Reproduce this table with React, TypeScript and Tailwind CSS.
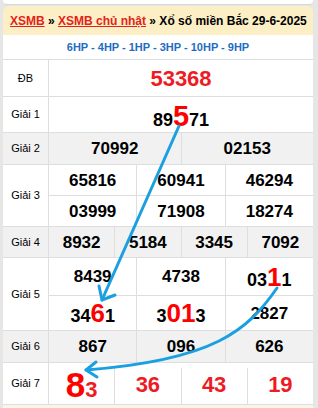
import React from "react";

const RED = "text-[#ed1c24]";

type Part = { t: string; big?: boolean };

const Num: React.FC<{ parts: Part[]; size?: string; bigSize?: string }> = ({
  parts,
  size = "text-[18px]",
  bigSize = "text-[26px]",
}) => (
  <span className="font-bold leading-none text-black">
    {parts.map((p, i) =>
      p.big ? (
        <span key={i} className={`${bigSize} text-[#ff0000]`}>
          {p.t}
        </span>
      ) : (
        <span key={i} className={size}>
          {p.t}
        </span>
      )
    )}
  </span>
);

const Label: React.FC<{ text: string }> = ({ text }) => (
  <div className="w-[46px] shrink-0 flex items-center justify-center border-r border-[#dedede] text-[11px] text-black">
    {text}
  </div>
);

const Cells: React.FC<{ items: React.ReactNode[]; h: string; last?: boolean }> = ({ items, h, last }) => (
  <div className={`flex ${h} ${last ? "" : "border-b border-[#dedede]"}`}>
    {items.map((it, i) => (
      <div
        key={i}
        className={`flex-1 flex items-center justify-center ${i < items.length - 1 ? "border-r border-[#dedede]" : ""}`}
      >
        {it}
      </div>
    ))}
  </div>
);

const n = (s: string) => <span className="text-[17px] font-bold leading-none text-black">{s}</span>;

export default function App() {
  return (
    <div
      className="relative w-[318px] h-[408px] overflow-hidden bg-[#e6e6e6]"
      style={{ fontFamily: '"Liberation Sans", Arial, sans-serif' }}
    >
      <div className="ml-[3px] w-[310px]">
        <div className="h-[5px] bg-white rounded-b-[4px] border-b border-[#d6d6d6]" />
        <div className="mt-[1px] h-[29px] bg-[#fcefc5] rounded-t-[6px] flex items-center pl-[7px] text-[12px] font-bold text-black whitespace-nowrap">
          <span className="text-[#e2231a] underline">XSMB</span>
          <span>&nbsp;»&nbsp;</span>
          <span className="text-[#e2231a] underline">XSMB chủ nhật</span>
          <span>&nbsp;» Xổ số miền Bắc 29-6-2025</span>
        </div>
        <div className="h-[25px] bg-white border-b border-[#dedede] flex items-center justify-center text-[11px] font-bold text-[#1f6dbf]">
          6HP - 4HP - 1HP - 3HP - 10HP - 9HP
        </div>

        {/* ĐB */}
        <div className="flex h-[37px] bg-white border-b border-[#dedede]">
          <Label text="ĐB" />
          <div className="flex-1 flex items-center justify-center">
            <span className={`text-[22px] font-bold ${RED}`}>53368</span>
          </div>
        </div>

        {/* Giải 1 */}
        <div className="flex h-[36px] bg-white border-b border-[#dedede]">
          <Label text="Giải 1" />
          <div className="flex-1 flex items-center justify-center pt-[4px]">
            <Num parts={[{ t: "89" }, { t: "5", big: true }, { t: "71" }]} size="text-[18px]" bigSize="text-[29px]" />
          </div>
        </div>

        {/* Giải 2 */}
        <div className="flex h-[32px] bg-[#f1f1f1] border-b border-[#dedede]">
          <Label text="Giải 2" />
          <div className="flex-1">
            <Cells items={[n("70992"), n("02153")]} h="h-full" last />
          </div>
        </div>

        {/* Giải 3 */}
        <div className="flex h-[62px] bg-white border-b border-[#dedede]">
          <Label text="Giải 3" />
          <div className="flex-1 flex flex-col">
            <Cells items={[n("65816"), n("60941"), n("46294")]} h="h-[31px]" />
            <Cells items={[n("03999"), n("71908"), n("18274")]} h="flex-1" last />
          </div>
        </div>

        {/* Giải 4 */}
        <div className="flex h-[31px] bg-[#f1f1f1] border-b border-[#dedede]">
          <Label text="Giải 4" />
          <div className="flex-1">
            <Cells items={[n("8932"), n("5184"), n("3345"), n("7092")]} h="h-full" last />
          </div>
        </div>

        {/* Giải 5 */}
        <div className="flex h-[73px] bg-white border-b border-[#dedede]">
          <Label text="Giải 5" />
          <div className="flex-1 flex flex-col">
            <Cells
              items={[n("8439"), n("4738"), <Num parts={[{ t: "03" }, { t: "1", big: true }, { t: "1" }]} />]}
              h="h-[38px]"
            />
            <Cells
              items={[
                <Num parts={[{ t: "34" }, { t: "6", big: true }, { t: "1" }]} />,
                <Num parts={[{ t: "3" }, { t: "01", big: true }, { t: "3" }]} />,
                n("2827"),
              ]}
              h="flex-1"
              last
            />
          </div>
        </div>

        {/* Giải 6 */}
        <div className="flex h-[32px] bg-[#f1f1f1] border-b border-[#dedede]">
          <Label text="Giải 6" />
          <div className="flex-1">
            <Cells items={[n("867"), n("096"), n("626")]} h="h-full" last />
          </div>
        </div>

        {/* Giải 7 */}
        <div className="flex h-[41px] bg-white">
          <Label text="Giải 7" />
          <div className="flex-1 flex pt-[5px]">
            <div className="flex-1 flex items-center justify-center border-r border-[#dedede] pb-[3px]">
              <span className={`font-bold leading-none ${RED}`}>
                <span className="text-[35px] text-[#ff0000]">8</span>
                <span className="text-[22px]">3</span>
              </span>
            </div>
            <div className="flex-1 flex items-center justify-center border-r border-[#dedede] pb-[3px]">
              <span className={`text-[22px] font-bold ${RED}`}>36</span>
            </div>
            <div className="flex-1 flex items-center justify-center border-r border-[#dedede] pb-[3px]">
              <span className={`text-[22px] font-bold ${RED}`}>43</span>
            </div>
            <div className="flex-1 flex items-center justify-center pb-[3px]">
              <span className={`text-[22px] font-bold ${RED}`}>19</span>
            </div>
          </div>
        </div>
        <div className="h-[10px] bg-[#fdf5e4] border-t border-[#dedede]" />
      </div>

      {/* arrows */}
      <svg className="absolute inset-0 pointer-events-none" width="318" height="408" viewBox="0 0 318 408">
        <g fill="none" stroke="#1aa0e0" strokeWidth="3" strokeLinecap="round" strokeLinejoin="round">
          <path d="M179 126 L102 300" />
          <path d="M99 286 L102 300 L115 295" />
          <path d="M277 288 C 248 330, 215 360, 86 370" />
          <path d="M96 362 L86 370 L97 377" />
        </g>
      </svg>
    </div>
  );
}
